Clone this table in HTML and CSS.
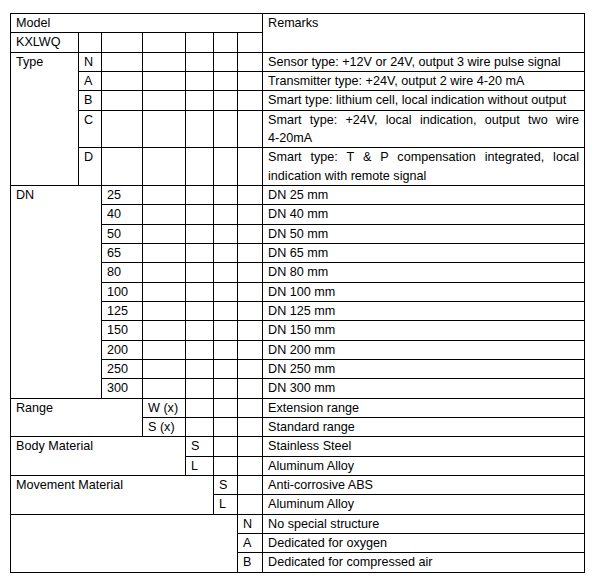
FILE: index.html
```html
<!DOCTYPE html>
<html>
<head>
<meta charset="utf-8">
<link rel="stylesheet" href="styles.css">
</head>
<body>
<table class="spec">
  <colgroup>
    <col class="w68"><col class="w23"><col class="w41"><col class="w43"><col class="w28"><col class="w24"><col class="w25"><col class="w322">
  </colgroup>
  <tr><td colspan="7">Model</td><td rowspan="2">Remarks</td></tr>
  <tr><td>KXLWQ</td><td></td><td></td><td></td><td></td><td></td><td></td></tr>
  <tr><td rowspan="5">Type</td><td>N</td><td></td><td></td><td></td><td></td><td></td><td>Sensor type: +12V or 24V, output 3 wire pulse signal</td></tr>
  <tr><td>A</td><td></td><td></td><td></td><td></td><td></td><td>Transmitter type: +24V, output 2 wire 4-20 mA</td></tr>
  <tr><td>B</td><td></td><td></td><td></td><td></td><td></td><td>Smart type: lithium cell, local indication without output</td></tr>
  <tr><td>C</td><td></td><td></td><td></td><td></td><td></td><td><span class="jline">Smart type: +24V, local indication, output two wire</span>4-20mA</td></tr>
  <tr><td>D</td><td></td><td></td><td></td><td></td><td></td><td><span class="jline">Smart type: T &amp; P compensation integrated, local</span>indication with remote signal</td></tr>
  <tr><td colspan="2" rowspan="11">DN</td><td>25</td><td></td><td></td><td></td><td></td><td>DN 25 mm</td></tr>
  <tr><td>40</td><td></td><td></td><td></td><td></td><td>DN 40 mm</td></tr>
  <tr><td>50</td><td></td><td></td><td></td><td></td><td>DN 50 mm</td></tr>
  <tr><td>65</td><td></td><td></td><td></td><td></td><td>DN 65 mm</td></tr>
  <tr><td>80</td><td></td><td></td><td></td><td></td><td>DN 80 mm</td></tr>
  <tr><td>100</td><td></td><td></td><td></td><td></td><td>DN 100 mm</td></tr>
  <tr><td>125</td><td></td><td></td><td></td><td></td><td>DN 125 mm</td></tr>
  <tr><td>150</td><td></td><td></td><td></td><td></td><td>DN 150 mm</td></tr>
  <tr><td>200</td><td></td><td></td><td></td><td></td><td>DN 200 mm</td></tr>
  <tr><td>250</td><td></td><td></td><td></td><td></td><td>DN 250 mm</td></tr>
  <tr><td>300</td><td></td><td></td><td></td><td></td><td>DN 300 mm</td></tr>
  <tr><td colspan="3" rowspan="2">Range</td><td>W (x)</td><td></td><td></td><td></td><td>Extension range</td></tr>
  <tr><td>S (x)</td><td></td><td></td><td></td><td>Standard range</td></tr>
  <tr><td colspan="4" rowspan="2">Body Material</td><td>S</td><td></td><td></td><td>Stainless Steel</td></tr>
  <tr><td>L</td><td></td><td></td><td>Aluminum Alloy</td></tr>
  <tr><td colspan="5" rowspan="2">Movement Material</td><td>S</td><td></td><td>Anti-corrosive ABS</td></tr>
  <tr><td>L</td><td></td><td>Aluminum Alloy</td></tr>
  <tr><td colspan="6" rowspan="3"></td><td>N</td><td>No special structure</td></tr>
  <tr><td>A</td><td>Dedicated for oxygen</td></tr>
  <tr><td>B</td><td>Dedicated for compressed air</td></tr>
</table>
</body>
</html>
```
FILE: styles.css
```css
html, body {
  margin: 0;
  padding: 0;
  background: #fff;
}

.spec {
  margin: 13px 0 0 10px;
  border-collapse: collapse;
  table-layout: fixed;
  width: 574px;
  font-family: "Liberation Sans", Arial, sans-serif;
  font-size: 12.6px;
  line-height: 18.33px;
  color: #000;
}

.spec td {
  border: 1px solid #000;
  padding: 0 5px;
  vertical-align: top;
  text-align: left;
  white-space: nowrap;
  overflow: hidden;
}

.spec .jline {
  display: block;
  text-align: justify;
  text-align-last: justify;
  white-space: normal;
}

.w68 { width: 68px; }
.w23 { width: 23px; }
.w41 { width: 41px; }
.w43 { width: 43px; }
.w28 { width: 28px; }
.w24 { width: 24px; }
.w25 { width: 25px; }
.w322 { width: 322px; }
```
